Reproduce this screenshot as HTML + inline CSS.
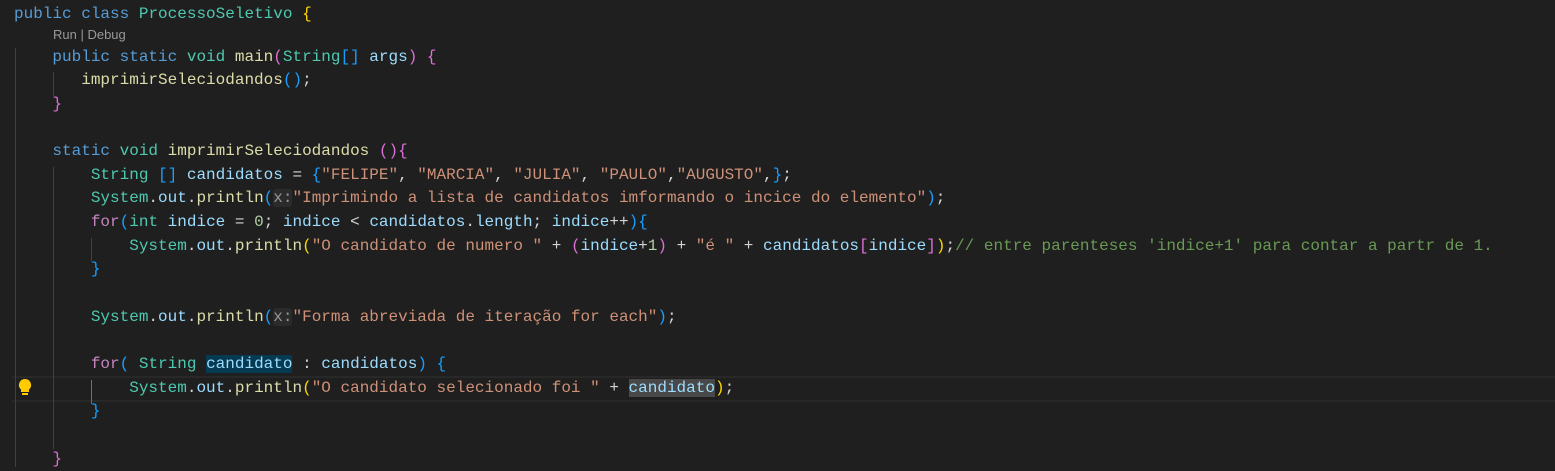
<!DOCTYPE html>
<html><head><meta charset="utf-8"><style>
body{margin:0;width:1555px;height:467px;background:#1f1f1f;overflow:hidden;position:relative;font-family:"Liberation Mono",monospace;font-size:16px;color:#d4d4d4}
.l{position:absolute;left:14px;height:23.6px;line-height:23.6px;white-space:pre}
.k{color:#569cd6}.c{color:#c586c0}.t{color:#4ec9b0}.f{color:#dcdcaa}.v{color:#9cdcfe}.s{color:#ce9178}.m{color:#6a9955}.n{color:#b5cea8}
.y{color:#ffd700}.p{color:#da70d6}.b{color:#179fff}
.h{color:#969696;background:#2b2b2b;border-radius:3px}
.g{position:absolute;width:1px;background:#404040}
.cl{position:absolute;left:53px;top:27px;font-family:"Liberation Sans",sans-serif;font-size:13px;color:#999}
</style></head><body>
<div style="position:absolute;left:12px;right:0;top:376px;height:22px;border-top:2px solid #282828;border-bottom:2px solid #282828"></div>
<div class="g" style="left:15px;top:48px;height:419px"></div>
<div class="g" style="left:53px;top:72px;height:24px"></div>
<div class="g" style="left:53px;top:167px;height:282px"></div>
<div class="g" style="left:91px;top:238px;height:24px"></div>
<div class="g" style="left:91px;top:380px;height:24px;background:#707070"></div>
<div class="l" style="top:3px"><span class="k">public</span> <span class="k">class</span> <span class="t">ProcessoSeletivo</span> <span class="y">{</span></div>
<div class="cl">Run | Debug</div>
<div class="l" style="top:45.5px">    <span class="k">public</span> <span class="k">static</span> <span class="t">void</span> <span class="f">main</span><span class="p">(</span><span class="t">String</span><span class="b">[]</span> <span class="v">args</span><span class="p">)</span> <span class="p">{</span></div>
<div class="l" style="top:69.1px">       <span class="f">imprimirSeleciodandos</span><span class="b">()</span>;</div>
<div class="l" style="top:92.8px">    <span class="p">}</span></div>
<div class="l" style="top:140.1px">    <span class="k">static</span> <span class="t">void</span> <span class="f">imprimirSeleciodandos</span> <span class="p">()</span><span class="p">{</span></div>
<div class="l" style="top:163.7px">        <span class="t">String</span> <span class="b">[]</span> <span class="v">candidatos</span> = <span class="b">{</span><span class="s">"FELIPE"</span>, <span class="s">"MARCIA"</span>, <span class="s">"JULIA"</span>, <span class="s">"PAULO"</span>,<span class="s">"AUGUSTO"</span>,<span class="b">}</span>;</div>
<div class="l" style="top:187.4px">        <span class="t">System</span>.<span class="v">out</span>.<span class="f">println</span><span class="b">(</span><span class="h">x:</span><span class="s">"Imprimindo a lista de candidatos imformando o incice do elemento"</span><span class="b">)</span>;</div>
<div class="l" style="top:211px">        <span class="c">for</span><span class="b">(</span><span class="t">int</span> <span class="v">indice</span> = <span class="n">0</span>; <span class="v">indice</span> &lt; <span class="v">candidatos</span>.<span class="v">length</span>; <span class="v">indice</span>++<span class="b">){</span></div>
<div class="l" style="top:234.7px">            <span class="t">System</span>.<span class="v">out</span>.<span class="f">println</span><span class="y">(</span><span class="s">"O candidato de numero "</span> + <span class="p">(</span><span class="v">indice</span>+<span class="n">1</span><span class="p">)</span> + <span class="s">"é "</span> + <span class="v">candidatos</span><span class="p">[</span><span class="v">indice</span><span class="p">]</span><span class="y">)</span>;<span class="m">// entre parenteses 'indice+1' para contar a partr de 1.</span></div>
<div class="l" style="top:258.3px">        <span class="b">}</span></div>
<div class="l" style="top:305.6px">        <span class="t">System</span>.<span class="v">out</span>.<span class="f">println</span><span class="b">(</span><span class="h">x:</span><span class="s">"Forma abreviada de iteração for each"</span><span class="b">)</span>;</div>
<div class="l" style="top:352.9px">        <span class="c">for</span><span class="b">(</span> <span class="t">String</span> <span class="v" style="background:#063a52">candidato</span> : <span class="v">candidatos</span><span class="b">)</span> <span class="b">{</span></div>
<div class="l" style="top:376.6px">            <span class="t">System</span>.<span class="v">out</span>.<span class="f">println</span><span class="y">(</span><span class="s">"O candidato selecionado foi "</span> + <span class="v" style="background:#484848">candidato</span><span class="y">)</span>;</div>
<div class="l" style="top:400.2px">        <span class="b">}</span></div>
<div class="l" style="top:447.5px">    <span class="p">}</span></div>
<svg style="position:absolute;left:17px;top:378px" width="16" height="20" viewBox="0 0 16 20"><path d="M8 1a6 6 0 0 0-4 10.5V14h8v-2.5A6 6 0 0 0 8 1z" fill="#ffcc00"/><rect x="5" y="15" width="6" height="2" fill="#ffcc00"/></svg>
</body></html>
